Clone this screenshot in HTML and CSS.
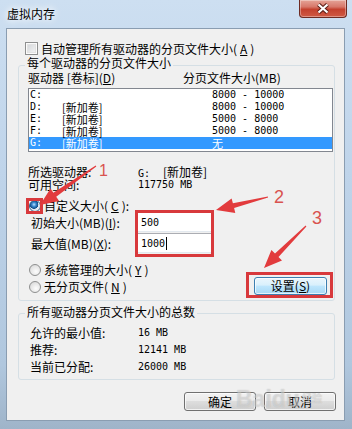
FILE: index.html
```html
<!DOCTYPE html>
<html lang="zh-CN">
<head>
    <meta charset="UTF-8">
    <meta name="viewport" content="width=device-width, initial-scale=1.0">
    <title>虚拟内存</title>
    <link rel="stylesheet" href="styles.css">
</head>
<body>
<div class="window">
    <div class="titlebar">
        <span class="title">虚拟内存</span>
        <div class="close">
            <svg width="14" height="11" viewBox="0 0 14 11">
                <path d="M2.5 1.5 L11.5 9.5 M11.5 1.5 L2.5 9.5" stroke="#5b1f18" stroke-width="4.2"/>
                <path d="M2.5 1.5 L11.5 9.5 M11.5 1.5 L2.5 9.5" stroke="#fff" stroke-width="2.2"/>
            </svg>
        </div>
    </div>

    <div class="client">
        <div class="check-row"><span class="checkbox"></span>自动管理所有驱动器的分页文件大小(<u>A</u>)</div>

        <div class="group group-drives">
            <div class="group-title">每个驱动器的分页文件大小</div>
            <div class="list-head">
                <span class="col-drive">驱动器 [卷标](<u>D</u>)</span>
                <span>分页文件大小(MB)</span>
            </div>
            <div class="listbox">
                <div class="list-row"><span class="mono">C:</span><span></span><span class="mono">8000 - 10000</span></div>
                <div class="list-row"><span class="mono">D:</span><span>[新加卷]</span><span class="mono">8000 - 10000</span></div>
                <div class="list-row"><span class="mono">E:</span><span>[新加卷]</span><span class="mono">5000 - 8000</span></div>
                <div class="list-row"><span class="mono">F:</span><span>[新加卷]</span><span class="mono">5000 - 8000</span></div>
                <div class="list-row selected"><span class="mono">G:</span><span>[新加卷]</span><span>无</span></div>
            </div>

            <div class="info">
                <div class="info-row"><span>所选驱动器:</span><span><span class="mono">G:</span><span class="vol">[新加卷]</span></span></div>
                <div class="info-row"><span>可用空间:</span><span class="mono">117750 MB</span></div>
            </div>

            <div class="radio-row custom"><span class="radio on"></span>自定义大小(<u>C</u>):</div>
            <div class="field-row">
                <span class="field-label">初始大小(MB)(<u>I</u>):</span>
                <span class="input mono">500</span>
            </div>
            <div class="field-row">
                <span class="field-label">最大值(MB)(<u>X</u>):</span>
                <span class="input mono">1000<span class="caret"></span></span>
            </div>

            <div class="bottom-row">
                <div class="radios">
                    <div class="radio-row"><span class="radio"></span>系统管理的大小(<u>Y</u>)</div>
                    <div class="radio-row"><span class="radio"></span>无分页文件(<u>N</u>)</div>
                </div>
                <button class="btn btn-set">设置(<u>S</u>)</button>
            </div>
        </div>

        <div class="group group-total">
            <div class="group-title">所有驱动器分页文件大小的总数</div>
            <div class="totals">
                <div class="info-row"><span>允许的最小值:</span><span class="mono">16 MB</span></div>
                <div class="info-row"><span>推荐:</span><span class="mono">12141 MB</span></div>
                <div class="info-row"><span>当前已分配:</span><span class="mono">26000 MB</span></div>
            </div>
        </div>

        <div class="actions">
            <button class="btn">确定</button>
            <button class="btn">取消</button>
        </div>
    </div>

    <div class="watermark">Baidu<span>经验</span></div>

    <!-- red annotations drawn over the dialog -->
    <svg class="marks" width="352" height="429" viewBox="0 0 352 429">
        <g fill="none" stroke="#d8393c" stroke-width="3">
            <rect x="27.5" y="199.5" width="14" height="13"/>
            <rect x="136.5" y="211.5" width="76" height="44"/>
            <rect x="247.5" y="273.5" width="84" height="23"/>
        </g>
        <g fill="#e23b3d">
            <polygon points="95.7,165.5 53.3,192.7 50.5,188.6 40,205 59.1,200.9 56.2,196.8 96.3,166.5"/>
            <polygon points="267.9,196.4 232.9,203.2 231.6,198.4 216,210 235.3,212.9 234.1,208.1 268.1,197.6"/>
            <polygon points="305.6,225.6 275.0,253.5 271.4,250.0 264,268 282.0,260.6 278.5,257.0 306.4,226.4"/>
        </g>
        <g fill="#d9534f" font-family="Liberation Sans, sans-serif">
            <text x="99" y="176" font-size="16">1</text>
            <text x="274" y="203" font-size="18">2</text>
            <text x="312" y="224" font-size="18">3</text>
        </g>
    </svg>
</div>
</body>
</html>
```

FILE: styles.css
```css
* {
    box-sizing: border-box;
}
body {
    margin: 0;
    font-family: "Noto Sans CJK SC", "Noto Sans", sans-serif;
    font-size: 12px;
    color: #000;
}
u {
    text-underline-offset: 1px;
}
.mono {
    font-family: "DejaVu Sans Mono", "Noto Sans CJK SC", monospace;
    font-size: 10px;
}

/* window frame */
.window {
    position: relative;
    width: 352px;
    height: 429px;
    overflow: hidden;
    background: linear-gradient(#cddff1, #bfd4ea 40%, #b0c7de 85%, #9fb4c9);
}
.titlebar {
    display: flex;
    justify-content: space-between;
    align-items: flex-start;
    height: 28px;
}
.title {
    padding: 7px 0 0 7px;
    line-height: 13px;
    text-shadow: 0 0 6px #fff, 0 0 10px #fff;
}
.close {
    display: flex;
    justify-content: center;
    padding-top: 3px;
    width: 48px;
    height: 18px;
    margin-right: 5px;
    border: 1px solid #6e2b22;
    border-top: none;
    border-radius: 0 0 4px 4px;
    background: linear-gradient(#e5a497, #d7786a 40%, #c4412e 55%, #cf5a44);
    box-shadow: inset 0 0 0 1px rgba(255, 255, 255, 0.35);
}
.client {
    height: 393px;
    margin: 0 7px 0 6px;
    border: 1px solid #8a9db1;
    background: #f0f0f0;
}

/* controls */
.check-row {
    display: flex;
    align-items: center;
    gap: 3px;
    height: 13px;
    line-height: 13px;
    margin: 13px 0 0 18px;
}
.checkbox {
    width: 13px;
    height: 13px;
    border: 1px solid #8e8f8f;
    background: linear-gradient(135deg, #cfd2d6, #f8f8f8);
    box-shadow: inset 0 0 0 1px #fbfbfb, inset 0 0 0 2px #e2e2e2;
}
.radio-row {
    display: flex;
    align-items: center;
    gap: 3px;
    height: 12px;
    line-height: 12px;
}
.radio {
    width: 12px;
    height: 12px;
    border-radius: 50%;
    border: 1px solid #8e8f8f;
    background: radial-gradient(circle at 60% 65%, #fdfdfd, #e4e4e4 60%, #cfcfcf);
}
.radio.on {
    border-color: #2c628b;
    background: radial-gradient(circle at 40% 35%, #b9e2ff 0, #3b8ad0 2px, #0f4c86 4px, #dfe8f0 4.6px, #f4f4f4);
}

/* group boxes */
.group {
    border: 1px solid #d5dfe5;
    border-radius: 3px;
    margin: 10px 9px 0 11px;
}
.group-title {
    width: fit-content;
    height: 12px;
    line-height: 12px;
    margin: -9px 0 0 6px;
    padding: 0 2px;
    background: #f0f0f0;
}
.group-drives {
    padding-bottom: 5px;
}
.group-total {
    margin-top: 12px;
    padding-bottom: 6px;
}
.group-total .group-title {
    margin-top: -8px;
}
.list-head {
    display: flex;
    height: 12px;
    line-height: 12px;
    margin: 3px 0 0 9px;
}
.col-drive {
    width: 155px;
}
.listbox {
    height: 64px;
    margin: 4px 1px 0 9px;
    border: 1px solid #828790;
    background: #fff;
    font-size: 11px;
}
.list-row {
    display: grid;
    grid-template-columns: 32px 150px 1fr;
    align-items: center;
    height: 12px;
    line-height: 12px;
    padding-left: 1px;
}
.list-row.selected {
    background: #3399ff;
    color: #fff;
}
.info {
    display: grid;
    row-gap: 1px;
    margin-top: 14px;
}
.info-row {
    display: grid;
    grid-template-columns: 110px 1fr;
    height: 12px;
    line-height: 12px;
    padding-left: 9px;
}
.vol {
    margin-left: 13px;
}
.custom {
    margin: 9px 0 0 10px;
}
.field-row {
    display: flex;
    align-items: center;
    height: 20px;
    padding-left: 12px;
}
.field-row + .field-row {
    margin-top: 1px;
}
.field-label {
    width: 106px;
}
.input {
    display: flex;
    align-items: center;
    width: 76px;
    height: 20px;
    padding-left: 3px;
    border: 1px solid;
    border-color: #abadb3 #dbdfe6 #e3e9ef #e2e3ea;
    background: #fff;
}
.caret {
    width: 1px;
    height: 13px;
    margin-left: 1px;
    background: #000;
}
.bottom-row {
    display: flex;
    justify-content: space-between;
    margin: 11px 7px 0 10px;
}
.radios {
    display: flex;
    flex-direction: column;
    gap: 5px;
}
.totals {
    display: grid;
    row-gap: 5px;
    margin-top: 9px;
}
.totals .info-row {
    grid-template-columns: 108px 1fr;
    padding-left: 11px;
}

/* buttons */
.btn {
    width: 72px;
    height: 19px;
    padding: 0;
    font: inherit;
    line-height: 17px;
    color: #000;
    border: 1px solid #707070;
    border-radius: 3px;
    background: linear-gradient(#f2f2f2, #ebebeb 45%, #dddddd 50%, #cfcfcf);
    box-shadow: inset 0 0 0 1px rgba(255, 255, 255, 0.7);
}
.btn-set {
    width: 73px;
    height: 18px;
    margin-top: 13px;
    line-height: 16px;
    border-color: #3c7fb1;
    background: linear-gradient(#eaf6fd, #d9f0fc 45%, #bee6fd 50%, #a7d9f5);
}
.actions {
    display: flex;
    justify-content: flex-end;
    gap: 8px;
    margin: 12px 8px 0 0;
}

/* overlays */
.watermark {
    position: absolute;
    left: 236px;
    top: 386px;
    font-family: "Liberation Sans", sans-serif;
    font-weight: bold;
    font-size: 23px;
    color: rgba(255, 255, 255, 0.4);
    text-shadow: 0 0 1px rgba(110, 110, 110, 0.4);
}
.watermark span {
    margin-left: 2px;
    font-family: "Noto Sans CJK SC", sans-serif;
    font-size: 10px;
    vertical-align: 5px;
}
.marks {
    position: absolute;
    left: 0;
    top: 0;
    pointer-events: none;
}
```
